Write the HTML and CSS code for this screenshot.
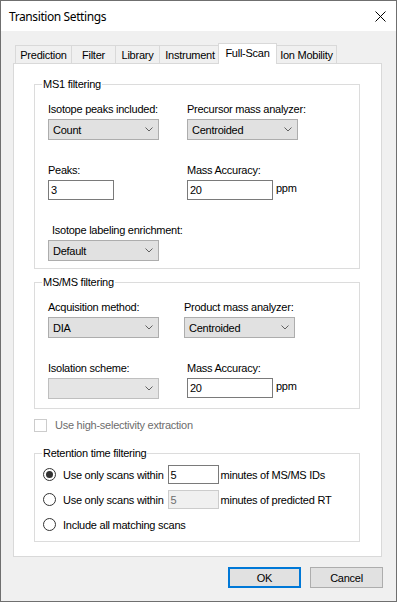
FILE: index.html
```html
<!DOCTYPE html>
<html>
<head>
<meta charset="utf-8">
<link rel="stylesheet" href="styles.css">
</head>
<body>
<div class="window">
  <div class="titlebar">
    <span class="title">Transition Settings</span>
    <svg class="close" width="11" height="11" viewBox="0 0 11 11"><path d="M0.5 0.5 L10.5 10.5 M10.5 0.5 L0.5 10.5" stroke="#000" stroke-width="1" fill="none"/></svg>
  </div>
  <div class="body">
    <div class="tabs">
      <div class="tab t-pred">Prediction</div>
      <div class="tab t-filter">Filter</div>
      <div class="tab t-lib">Library</div>
      <div class="tab t-inst">Instrument</div>
      <div class="tab t-full active">Full-Scan</div>
      <div class="tab t-ion">Ion Mobility</div>
    </div>
    <div class="panel">
      <fieldset class="group g-ms1">
        <legend>MS1 filtering</legend>
        <div class="grid">
          <div class="field">
            <div class="lbl">Isotope peaks included:</div>
            <div class="combo"><span>Count</span><svg class="chev" width="8" height="5" viewBox="0 0 8 5"><path d="M0.5 0.5 L4 4 L7.5 0.5" stroke="#606060" fill="none"/></svg></div>
          </div>
          <div class="field">
            <div class="lbl">Precursor mass analyzer:</div>
            <div class="combo"><span>Centroided</span><svg class="chev" width="8" height="5" viewBox="0 0 8 5"><path d="M0.5 0.5 L4 4 L7.5 0.5" stroke="#606060" fill="none"/></svg></div>
          </div>
          <div class="field">
            <div class="lbl">Peaks:</div>
            <div class="text w-peaks">3</div>
          </div>
          <div class="field">
            <div class="lbl">Mass Accuracy:</div>
            <div class="inline"><div class="text w-acc">20</div><span class="unit">ppm</span></div>
          </div>
          <div class="field">
            <div class="lbl indent">Isotope labeling enrichment:</div>
            <div class="combo"><span>Default</span><svg class="chev" width="8" height="5" viewBox="0 0 8 5"><path d="M0.5 0.5 L4 4 L7.5 0.5" stroke="#606060" fill="none"/></svg></div>
          </div>
        </div>
      </fieldset>

      <fieldset class="group g-ms2">
        <legend>MS/MS filtering</legend>
        <div class="grid grid2">
          <div class="field">
            <div class="lbl">Acquisition method:</div>
            <div class="combo"><span>DIA</span><svg class="chev" width="8" height="5" viewBox="0 0 8 5"><path d="M0.5 0.5 L4 4 L7.5 0.5" stroke="#606060" fill="none"/></svg></div>
          </div>
          <div class="field">
            <div class="lbl">Product mass analyzer:</div>
            <div class="combo"><span>Centroided</span><svg class="chev" width="8" height="5" viewBox="0 0 8 5"><path d="M0.5 0.5 L4 4 L7.5 0.5" stroke="#606060" fill="none"/></svg></div>
          </div>
          <div class="field">
            <div class="lbl">Isolation scheme:</div>
            <div class="combo disabled"><span></span><svg class="chev" width="8" height="5" viewBox="0 0 8 5"><path d="M0.5 0.5 L4 4 L7.5 0.5" stroke="#606060" fill="none"/></svg></div>
          </div>
          <div class="field shift">
            <div class="lbl">Mass Accuracy:</div>
            <div class="inline"><div class="text w-acc">20</div><span class="unit">ppm</span></div>
          </div>
        </div>
      </fieldset>

      <div class="check-row">
        <span class="checkbox"></span>
        <span class="disabled-text">Use high-selectivity extraction</span>
      </div>

      <fieldset class="group g-rt">
        <legend>Retention time filtering</legend>
        <div class="radios">
          <div class="radio-row">
            <span class="radio checked"></span>
            <span class="rtxt">Use only scans within</span>
            <div class="text w-min">5</div>
            <span class="after">minutes of MS/MS IDs</span>
          </div>
          <div class="radio-row">
            <span class="radio"></span>
            <span class="rtxt">Use only scans within</span>
            <div class="text w-min dis">5</div>
            <span class="after">minutes of predicted RT</span>
          </div>
          <div class="radio-row">
            <span class="radio"></span>
            <span class="rtxt">Include all matching scans</span>
          </div>
        </div>
      </fieldset>
    </div>
    <div class="buttons">
      <div class="btn default">OK</div>
      <div class="btn">Cancel</div>
    </div>
  </div>
</div>
</body>
</html>
```
FILE: styles.css
```css
* { box-sizing: border-box; }
html, body { margin: 0; padding: 0; background: #f0f0f0; }
.window {
  width: 397px;
  height: 602px;
  border: 1px solid #6f6f6f;
  background: #f0f0f0;
  font-family: "Liberation Sans", Arial, sans-serif;
  font-size: 11px;
  letter-spacing: -0.25px;
  color: #000;
  overflow: hidden;
}
.titlebar {
  height: 30px;
  background: #fff;
  display: flex;
  align-items: center;
  justify-content: space-between;
  padding: 0 10px 0 8px;
}
.title {
  font-family: "Noto Sans", "Open Sans", sans-serif;
  font-size: 12px;
  letter-spacing: -0.4px;
  color: #000;
}
.close { display: block; }
.body { padding: 12px 0 0 12px; }
.tabs {
  display: flex;
  align-items: flex-end;
  height: 20px;
  margin-left: 2px;
}
.tab {
  height: 18px;
  border: 1px solid #d9d9d9;
  border-bottom: none;
  margin-left: -1px;
  background: #f0f0f0;
  display: flex;
  align-items: center;
  justify-content: center;
  line-height: 13px;
  padding-top: 1px;
  white-space: nowrap;
}
.tab:first-child { margin-left: 0; }
.t-pred { width: 57px; }
.t-filter { width: 45px; }
.t-lib { width: 45px; }
.t-inst { width: 62px; }
.t-full { width: 59px; }
.t-ion { width: 63px; padding-left: 2px; }
.tab.active {
  height: 21px;
  margin: 0 -2px -1px -3px;
  background: #fff;
  position: relative;
  z-index: 1;
  padding-top: 0;
  padding-bottom: 2px;
}
.panel {
  width: 369px;
  height: 494px;
  background: #fff;
  border: 1px solid #d9d9d9;
  padding: 14px 0 0 20px;
}
.group {
  margin: 0;
  padding: 0;
  border: 1px solid #dcdcdc;
  width: 326px;
  min-inline-size: 0;
}
.group legend {
  padding: 0 1px;
  margin-left: 7px;
  line-height: 13px;
}
.grid {
  display: grid;
  grid-template-columns: 139px auto;
  row-gap: 24px;
  padding: 12px 0 7px 13px;
}
.grid2 {
  grid-template-columns: 136px auto;
  padding-bottom: 9px;
}
.g-ms2 { margin-top: 7px; }
.field { display: flex; flex-direction: column; align-items: flex-start; }
.shift { padding-left: 3px; }
.lbl { line-height: 13px; margin-bottom: 3px; white-space: nowrap; }
.indent { padding-left: 4px; }
.combo {
  width: 111px;
  height: 21px;
  background: #e1e1e1;
  border: 1px solid #adadad;
  display: flex;
  align-items: center;
  justify-content: space-between;
  padding: 0 5px 0 4px;
}
.combo.disabled { background: #e5e5e5; border-color: #bfbfbf; }
.chev { display: block; }
.text {
  height: 20px;
  border: 1px solid #7a7a7a;
  background: #fff;
  display: flex;
  align-items: center;
  padding-left: 2px;
}
.w-peaks { width: 66px; }
.w-acc { width: 86px; }
.inline { display: flex; align-items: flex-start; }
.unit { margin-left: 3px; margin-top: 2px; }
.check-row {
  display: flex;
  align-items: center;
  margin-top: 9px;
  height: 14px;
}
.checkbox {
  width: 13px;
  height: 13px;
  border: 1px solid #cccccc;
  background: #fff;
}
.disabled-text { color: #6d6d6d; margin-left: 8px; }
.g-rt { margin-top: 15px; }
.radios {
  display: flex;
  flex-direction: column;
  gap: 6px;
  padding: 5px 0 7px 8px;
}
.radio-row { display: flex; align-items: center; height: 19px; white-space: nowrap; }
.radio {
  width: 13px;
  height: 13px;
  border: 1px solid #333;
  border-radius: 50%;
  background: #fff;
  display: flex;
  align-items: center;
  justify-content: center;
  flex: none;
}
.radio.checked::after {
  content: "";
  width: 7px;
  height: 7px;
  border-radius: 50%;
  background: #333;
}
.rtxt { margin-left: 7px; }
.w-min { width: 51px; height: 19px; margin-left: 4px; }
.w-min.dis { background: #f0f0f0; border-color: #cccccc; color: #6d6d6d; }
.after { margin-left: 2px; }
.buttons {
  display: flex;
  justify-content: flex-end;
  gap: 9px;
  margin-top: 10px;
  width: 370px;
}
.btn {
  width: 73px;
  height: 21px;
  background: #e1e1e1;
  border: 1px solid #adadad;
  display: flex;
  align-items: center;
  justify-content: center;
}
.btn.default { border: 2px solid #0078d7; }
```
